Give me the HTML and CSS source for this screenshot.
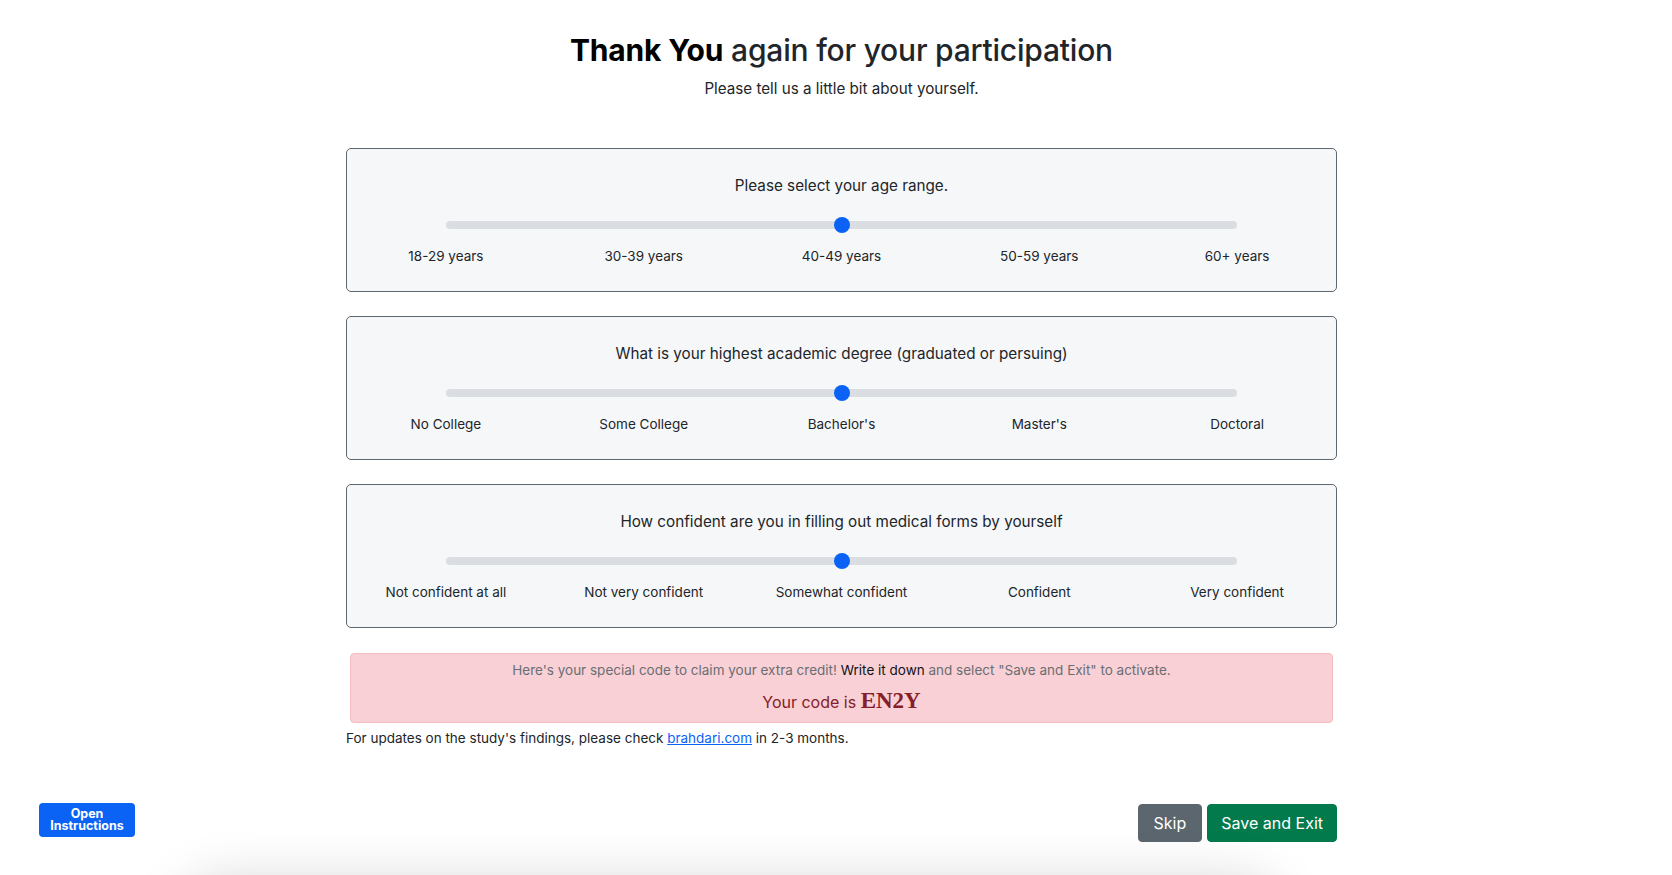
FILE: index.html
```html
<!DOCTYPE html>
<html lang="en">
<head>
<meta charset="utf-8">
<title>Thank You</title>
<link rel="stylesheet" href="styles.css">
</head>
<body>
<main class="survey">
  <header class="intro">
    <h3 class="title"><strong>Thank You</strong> again for your participation</h3>
    <p class="subtitle">Please tell us a little bit about yourself.</p>
  </header>

  <section class="question-card">
    <p class="question">Please select your age range.</p>
    <input class="scale" type="range" min="1" max="5" value="3">
    <div class="scale-labels">
      <span>18-29 years</span><span>30-39 years</span><span>40-49 years</span><span>50-59 years</span><span>60+ years</span>
    </div>
  </section>

  <section class="question-card">
    <p class="question">What is your highest academic degree (graduated or persuing)</p>
    <input class="scale" type="range" min="1" max="5" value="3">
    <div class="scale-labels">
      <span>No College</span><span>Some College</span><span>Bachelor's</span><span>Master's</span><span>Doctoral</span>
    </div>
  </section>

  <section class="question-card">
    <p class="question">How confident are you in filling out medical forms by yourself</p>
    <input class="scale" type="range" min="1" max="5" value="3">
    <div class="scale-labels">
      <span>Not confident at all</span><span>Not very confident</span><span>Somewhat confident</span><span>Confident</span><span>Very confident</span>
    </div>
  </section>

  <div class="code-alert">
    <p class="code-note">Here's your special code to claim your extra credit! <span class="strong-note">Write it down</span> and select "Save and Exit" to activate.</p>
    <p class="code-line">Your code is <span class="code">EN2Y</span></p>
  </div>
  <p class="updates">For updates on the study's findings, please check <a href="#">brahdari.com</a> in 2-3 months.</p>

  <div class="actions">
    <button class="btn btn-skip" type="button">Skip</button>
    <button class="btn btn-save" type="button">Save and Exit</button>
  </div>
</main>

<button class="open-instructions" type="button"><span class="oi-line">Open</span><span class="oi-line">Instructions</span></button>
<div class="bottom-sheet"></div>
</body>
</html>
```

FILE: styles.css
```css
* { box-sizing: border-box; }

html, body {
  margin: 0;
  padding: 0;
  background: #ffffff;
  overflow: hidden;
}

body {
  font-family: Inter, "Noto Sans", "Liberation Sans", sans-serif;
  font-size: 16px;
  line-height: 1.5;
  color: #212529;
  height: 875px;
}

p { margin: 0; }

.survey {
  width: 991px;
  margin-left: calc(50% - 490px);
  padding-top: 32px;
  display: flex;
  flex-direction: column;
}

.intro {
  text-align: center;
  margin-bottom: 47px;
}

.title {
  margin: 0;
  font-size: 30px;
  line-height: 36px;
  font-weight: 500;
  letter-spacing: -0.2px;
  color: #212529;
}

.title strong {
  font-weight: 700;
  color: #000;
}

.subtitle {
  margin-top: 9px;
  font-size: 15.2px;
  line-height: 24px;
}

.question-card {
  background: #f6f7f9;
  border: 1px solid #5d6870;
  border-radius: 5px;
  padding: 25px 0 24px;
  margin-bottom: 24px;
  display: flex;
  flex-direction: column;
  align-items: center;
}

.question {
  font-size: 15.25px;
  line-height: 24px;
  margin-bottom: 15px;
}

.scale {
  -webkit-appearance: none;
  appearance: none;
  width: 80%;
  height: 24px;
  margin: 0;
  padding: 0;
  background: transparent;
}

.scale::-webkit-slider-runnable-track {
  height: 8px;
  border-radius: 4px;
  background: #dadde1;
}

.scale::-webkit-slider-thumb {
  -webkit-appearance: none;
  appearance: none;
  width: 16px;
  height: 16px;
  margin-top: -4px;
  border: 0;
  border-radius: 50%;
  background: #0b63f6;
}

.scale-labels {
  width: 100%;
  margin-top: 8px;
  display: grid;
  grid-template-columns: repeat(5, 1fr);
  font-size: 13.5px;
  line-height: 22px;
  text-align: center;
}

.code-alert {
  margin: 1px 4px 0;
  padding: 6px 16px 5px;
  background: #f9d0d5;
  border: 1px solid #f4bcc2;
  border-radius: 4px;
  text-align: center;
}

.code-note {
  font-size: 13.5px;
  line-height: 21px;
  color: #6a6e73;
}

.strong-note {
  color: #111315;
  font-weight: 400;
}

.code-line {
  margin-top: 5px;
  font-size: 16px;
  line-height: 30px;
  color: #842029;
}

.code {
  font-family: "Liberation Serif", "DejaVu Serif", serif;
  font-weight: 700;
  font-size: 23px;
}

.updates {
  margin-top: 5px;
  font-size: 13.5px;
  line-height: 21px;
}

.updates a {
  color: #0b63f6;
  text-decoration: underline;
}

.actions {
  margin-top: 55px;
  display: flex;
  justify-content: flex-end;
  gap: 5px;
}

.btn {
  font-family: inherit;
  font-size: 16px;
  line-height: 24px;
  height: 38px;
  padding: 6px 15px;
  border: 1px solid transparent;
  border-radius: 4px;
  color: #fff;
  cursor: pointer;
}

.btn-skip {
  background: #5c666e;
  border-color: #5c666e;
}

.btn-save {
  padding: 6px 13px;
  background: #037a4c;
  border-color: #037a4c;
}

.open-instructions {
  position: fixed;
  left: 39px;
  top: 803px;
  width: 96px;
  height: 34px;
  padding: 0;
  border: 0;
  border-radius: 4px;
  background: #0b63f6;
  color: #fff;
  font-family: inherit;
  font-size: 12.5px;
  font-weight: 700;
  text-align: center;
  display: flex;
  flex-direction: column;
  align-items: center;
  justify-content: center;
  cursor: pointer;
}

.oi-line {
  display: block;
  line-height: 12px;
}

.bottom-sheet {
  position: fixed;
  left: 190px;
  width: 1080px;
  top: 895px;
  height: 200px;
  border-radius: 40px;
  background: #fff;
  box-shadow: 0 0 50px 20px rgba(0, 0, 0, 0.13);
}
```
